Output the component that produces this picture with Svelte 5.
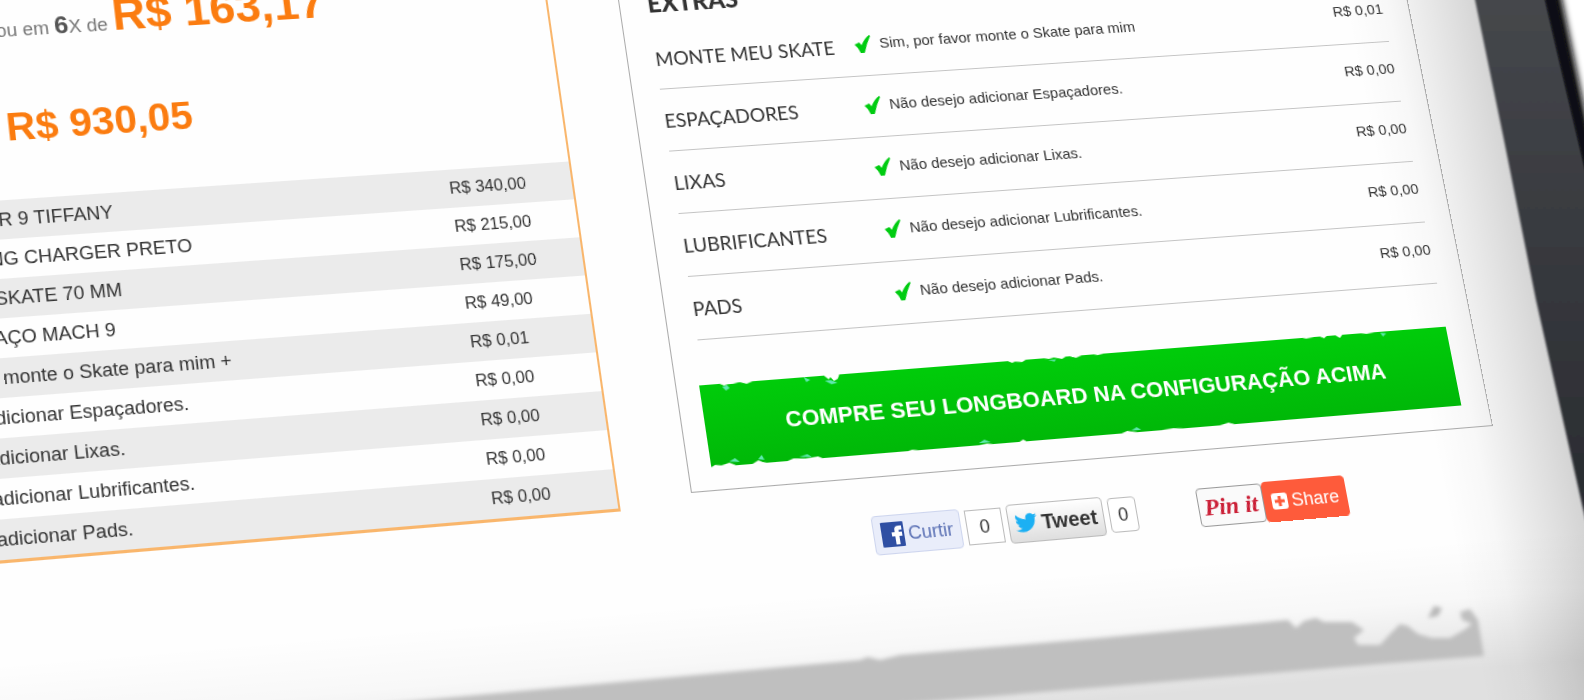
<script>
  // Corners of the extras panel on the flat page, and where the camera sees them.
  const flat = [[880, 120], [1680, 120], [1680, 613], [880, 613]];
  const seen = [[618, 0], [1398, -48], [1493, 426], [691, 493]];

  function solve(a, b) {
    const n = b.length;
    for (let i = 0; i < n; i++) {
      let p = i;
      for (let r = i + 1; r < n; r++) if (Math.abs(a[r][i]) > Math.abs(a[p][i])) p = r;
      [a[i], a[p]] = [a[p], a[i]];
      [b[i], b[p]] = [b[p], b[i]];
      for (let r = 0; r < n; r++) {
        if (r === i) continue;
        const f = a[r][i] / a[i][i];
        for (let c = i; c < n; c++) a[r][c] -= f * a[i][c];
        b[r] -= f * b[i];
      }
    }
    return b.map((v, i) => v / a[i][i]);
  }

  function project(from, to) {
    const a = [];
    const b = [];
    from.forEach(([x, y], i) => {
      const [u, v] = to[i];
      a.push([x, y, 1, 0, 0, 0, -u * x, -u * y]);
      b.push(u);
      a.push([0, 0, 0, x, y, 1, -v * x, -v * y]);
      b.push(v);
    });
    const h = solve(a, b);
    return `matrix3d(${[h[0], h[3], 0, h[6], h[1], h[4], 0, h[7], 0, 0, 1, 0, h[2], h[5], 0, 1].join(',')})`;
  }

  const view = project(flat, seen);

  const items = [
    ['SHAPE SECTOR 9 TIFFANY', 'R$ 340,00'],
    ['EIXO GULLWING CHARGER PRETO', 'R$ 215,00'],
    ['RODINHA DE SKATE 70 MM', 'R$ 175,00'],
    ['PARAFUSO - AÇO MACH 9', 'R$ 49,00'],
    ['Sim, por favor monte o Skate para mim +', 'R$ 0,01'],
    ['Não desejo adicionar Espaçadores.', 'R$ 0,00'],
    ['Não desejo adicionar Lixas.', 'R$ 0,00'],
    ['Não desejo adicionar Lubrificantes.', 'R$ 0,00'],
    ['Não desejo adicionar Pads.', 'R$ 0,00']
  ];

  const extras = [
    ['MONTE MEU SKATE', 'Sim, por favor monte o Skate para mim', 'R$ 0,01'],
    ['ESPAÇADORES', 'Não desejo adicionar Espaçadores.', 'R$ 0,00'],
    ['LIXAS', 'Não desejo adicionar Lixas.', 'R$ 0,00'],
    ['LUBRIFICANTES', 'Não desejo adicionar Lubrificantes.', 'R$ 0,00'],
    ['PADS', 'Não desejo adicionar Pads.', 'R$ 0,00']
  ];
</script>

<main class="stage">
  <svg class="backdrop" viewBox="0 0 1584 700" preserveAspectRatio="none" aria-hidden="true">
    <defs>
      <linearGradient id="side" gradientUnits="userSpaceOnUse" x1="1368" y1="122" x2="1506" y2="94">
        <stop offset="0" stop-color="#000" stop-opacity="0" />
        <stop offset="0.3" stop-color="#000" stop-opacity="0.025" />
        <stop offset="0.6" stop-color="#000" stop-opacity="0.09" />
        <stop offset="1" stop-color="#000" stop-opacity="0.18" />
      </linearGradient>
      <linearGradient id="floor" gradientUnits="userSpaceOnUse" x1="1100" y1="570" x2="1111" y2="700">
        <stop offset="0" stop-color="#000" stop-opacity="0" />
        <stop offset="0.45" stop-color="#000" stop-opacity="0.025" />
        <stop offset="1" stop-color="#000" stop-opacity="0.12" />
      </linearGradient>
      <linearGradient id="bezel" x1="0" y1="0" x2="0" y2="1">
        <stop offset="0" stop-color="#46484c" />
        <stop offset="0.35" stop-color="#3a3c41" />
        <stop offset="1" stop-color="#25272c" />
      </linearGradient>
      <filter id="soft" x="-5%" y="-20%" width="110%" height="140%"><feGaussianBlur stdDeviation="2" /></filter>
      <filter id="edge" x="-20%" y="-5%" width="140%" height="110%"><feGaussianBlur stdDeviation="1" /></filter>
      <filter id="rim" x="-40%" y="-10%" width="180%" height="120%"><feGaussianBlur stdDeviation="3" /></filter>
    </defs>
    <rect width="1584" height="700" fill="#fefefe" />
    <rect width="1584" height="700" fill="url(#side)" />
    <rect width="1584" height="700" fill="url(#floor)" />
    <g filter="url(#soft)">
      <path
        d="M380 704L860 660 868 657 880 660 900 655 1100 638 1288 620 1296 628 1304 621 1316 618 1324 622 1352 622 1364 630 1354 638 1358 645 1380 645 1390 634 1400 624 1408 626 1418 634 1432 638 1450 638 1464 630 1472 624 1462 620 1460 612 1470 609 1478 620 1484 656 1380 664 900 704Z"
        fill="#bfbfbf" />
      <path d="M1428 618L1434 606 1442 608 1438 616Z" fill="#b8b8b8" />
    </g>
    <path d="M1530 -20H1620V400H1600Z" fill="#fff" />
    <path d="M1535 -30H1556L1587 120 1620 250V400L1560 100Z" fill="#08080a" filter="url(#rim)" />
    <path d="M1473 -10L1504 140 1536 300 1581 500 1604 600H1640V390L1584 163 1543 -10Z" fill="url(#bezel)" filter="url(#edge)" />
    <path d="M1543 -10H1554L1584 128 1610 240V290L1584 163Z" fill="#101116" filter="url(#edge)" />
  </svg>

  <div class="page" style:transform={view}>
    <section class="card" aria-label="Resumo">
      <div class="totals">
        <p class="parcel">ou em <b>6</b>X de <strong>R$ 163,17</strong></p>
        <p class="cash">R$ 930,05</p>
      </div>
      <table class="items">
        <tbody>
          {#each items as [name, price]}
            <tr><td>{name}</td><td class="cost">{price}</td></tr>
          {/each}
        </tbody>
      </table>
    </section>

    <div class="side">
      <section class="panel">
        <h2>EXTRAS</h2>
        <ul>
          {#each extras as [name, choice, price]}
            <li>
              <span class="name">{name}</span>
              <span class="choice">
                <svg viewBox="0 0 17 18" aria-hidden="true"><path d="M0 9L5 7 7 10Q11 3 16 0L17 1Q12 9 9 18H5Q4 13 0 9Z" fill="#0c1" /></svg>
                {choice}
              </span>
              <span class="price">{price}</span>
            </li>
          {/each}
        </ul>
        <button class="buy" type="button">
          <svg viewBox="0 0 750 80" preserveAspectRatio="none" aria-hidden="true">
            <g fill="#fff">
              <path d="M20 0L24 2 28 1 33 1 38 0Z M40 0L46 2 52 0Z M122 0L126 4 128 2 131 6 135 4 137 0Z M304 0L308 2 311 1 318 2 322 0Z M340 0L345 1 350 0 358 2 362 0Z M366 0L372 2 378 0Z M390 0L394 1 400 0Z M602 0L606 1 614 0Z M620 0L624 2 627 0Z M636 0L640 3 643 0Z M662 0L668 1 676 0Z" />
              <path d="M0 80L4 78 10 79 18 77 24 80Z M40 80L46 77 50 79 54 80Z M74 80L80 78 92 79 104 78 108 80Z M192 80L196 79 202 80Z M262 80L270 79 276 80Z M302 80L306 78 309 80Z M404 80L410 78 420 80Z M444 80L456 79 466 80Z M503 80L512 78 518 80Z" />
            </g>
            <g fill="#5fe8b0">
              <path d="M22 3L27 2 29 5 25 7Z M102 0L108 3 104 5Z M122 5L128 5 134 8 128 9Z M344 2L352 2 350 4Z M682 1L688 2 684 5Z" />
              <path d="M18 76L24 73 28 77Z M46 76L50 72 52 77Z M86 77L94 75 98 78Z M262 78L268 75 274 78Z M414 78L420 75 424 78Z" />
            </g>
          </svg>
          <span>COMPRE SEU LONGBOARD NA CONFIGURAÇÃO ACIMA</span>
        </button>
      </section>

      <div class="social">
        <button class="like" type="button">
          <svg viewBox="0 0 22 24" aria-hidden="true">
            <rect width="22" height="24" rx="1" fill="#2f4fa3" />
            <path d="M13 22V14H10V10H13V8Q13 4 17 4H20V8H18Q17 8 17 9V10H20V14H17V22Z" fill="#fff" />
          </svg>
          Curtir
        </button>
        <span class="count notch">0</span>
        <button class="tweet" type="button">
          <svg viewBox="0 0 24 20" aria-hidden="true">
            <path d="M24 2.4A10 10 0 0 1 21.2 3.2 5 5 0 0 0 23.3.4 9.600 9.600 0 0 1 20.200 1.600 4.900 4.900 0 0 0 11.800 6.100 14 14 0 0 1 1.700 1 4.900 4.900 0 0 0 3.200 7.500 4.900 4.900 0 0 1 1 6.900 4.900 4.900 0 0 0 4.900 11.800 5 5 0 0 1 2.700 11.900 4.900 4.900 0 0 0 7.300 15.300 9.900 9.900 0 0 1 0 17.300 14 14 0 0 0 21.500 4.900 10 10 0 0 0 24 2.400Z" fill="#1cb0f3" />
          </svg>
          Tweet
        </button>
        <span class="count">0</span>
        <a class="pin" href="#pin">Pin it</a>
        <a class="share" href="#share">
          <svg viewBox="0 0 16 16" aria-hidden="true">
            <rect width="16" height="16" rx="3" fill="#fff" />
            <path d="M8 3V13M3 8H13" stroke="#fe5b3b" stroke-width="3" />
          </svg>
          Share
        </a>
      </div>
    </div>
  </div>
</main>

<style>
  :global(body) {
    margin: 0;
    background: #fff;
  }
  .stage {
    position: relative;
    height: 100vh;
    overflow: hidden;
    font-family: "Liberation Sans", Arial, sans-serif;
    color: #333;
  }
  .backdrop {
    position: absolute;
    inset: 0;
    width: 100%;
    height: 100%;
  }
  .page {
    position: relative;
    display: grid;
    grid-template-columns: 811fr 800fr;
    gap: 69px;
    align-items: start;
    box-sizing: border-box;
    width: calc(100% + 96px);
    transform-origin: 0 0;
  }
  .card {
    border: solid #f9b66c;
    border-width: 0 2px 3px 0;
  }
  .totals {
    display: flex;
    flex-direction: column;
    box-sizing: border-box;
    height: 280px;
    padding: 76px 0 0 281px;
  }
  p,
  h2,
  ul {
    margin: 0;
    padding: 0;
  }
  .parcel {
    font-size: 18px;
    line-height: 56px;
    color: #777;
  }
  .parcel b {
    font-size: 24px;
    color: #555;
  }
  .parcel strong {
    font-size: 44px;
    color: #fb7c10;
  }
  .cash {
    margin-top: 40px;
    font-size: 38px;
    font-weight: bold;
    line-height: 56px;
    color: #fb7c10;
  }
  .items {
    width: 100%;
    border-collapse: collapse;
  }
  .items tr:nth-child(odd) {
    background: #ebebeb;
  }
  .items td {
    height: 38px;
    padding: 0 0 0 137px;
    font-size: 18px;
    line-height: 24px;
    white-space: nowrap;
  }
  .items .cost {
    width: 118px;
    padding: 0;
    font-size: 16px;
  }
  .panel {
    box-sizing: border-box;
    padding: 109px 27px 22px;
    border: 1px solid #aaa;
  }
  h2 {
    font-family: Lato, sans-serif;
    font-size: 24px;
    font-weight: 900;
    line-height: 32px;
  }
  ul {
    padding-top: 9px;
    list-style: none;
  }
  li {
    display: grid;
    grid-template-columns: 199px 1fr auto;
    align-items: start;
    height: 62px;
    border-bottom: 1px solid #c4c4c4;
  }
  .name {
    padding-top: 20px;
    font-family: Lato, sans-serif;
    font-size: 19px;
    line-height: 24px;
    white-space: nowrap;
  }
  .choice {
    display: flex;
    align-items: center;
    gap: 8px;
    padding-top: 18px;
    font-size: 15px;
    line-height: 24px;
  }
  .choice svg {
    width: 17px;
    height: 18px;
  }
  .price {
    padding-top: 16px;
    font-size: 15px;
    line-height: 24px;
  }
  .buy {
    position: relative;
    display: block;
    width: calc(100% + 5px);
    height: 80px;
    margin: 44px 0 0 -5px;
    padding: 0 0 0 8px;
    border: 0;
    background: linear-gradient(#00cc0a, #00b808);
    font: bold 22px "Liberation Sans", Arial, sans-serif;
    color: #fff;
  }
  .buy svg {
    position: absolute;
    inset: 0;
    width: 100%;
    height: 100%;
  }
  .buy span {
    position: relative;
  }
  .social {
    display: flex;
    align-items: center;
    gap: 5px;
    padding: 36px 0 0 168px;
    font-size: 18px;
  }
  .social button,
  .social a,
  .count {
    display: flex;
    align-items: center;
    justify-content: center;
    box-sizing: border-box;
    height: 38px;
    padding: 0;
    gap: 4px;
    border: 1px solid #bbb;
    border-radius: 4px;
    font-family: inherit;
    text-decoration: none;
  }
  .social .like {
    width: 86px;
    border-color: #cdd5ee;
    background: #e9edfa;
    font-size: 18px;
    color: #5a70b4;
  }
  .like svg {
    flex: none;
    width: 22px;
    height: 24px;
  }
  .social .count {
    width: 28px;
    height: 34px;
    background: #fff;
  }
  .social .notch {
    width: 36px;
    border-radius: 0;
  }
  .social .tweet {
    width: 95px;
    background: linear-gradient(#fff, #dedede);
    font-size: 20px;
    font-weight: bold;
    color: #333;
  }
  .tweet svg {
    flex: none;
    width: 22px;
    height: 20px;
  }
  .social .pin {
    width: 66px;
    margin-left: 56px;
    border-color: #999;
    background: #fafafa;
    font-family: "Liberation Serif", serif;
    font-size: 24px;
    font-style: italic;
    font-weight: bold;
    color: #cb2037;
  }
  .social .share {
    width: 84px;
    height: 40px;
    margin-left: -5px;
    border-color: #fe5b3b;
    background: #fe5b3b;
    color: #fff;
  }
  .share svg {
    flex: none;
    width: 16px;
    height: 16px;
  }
</style>
